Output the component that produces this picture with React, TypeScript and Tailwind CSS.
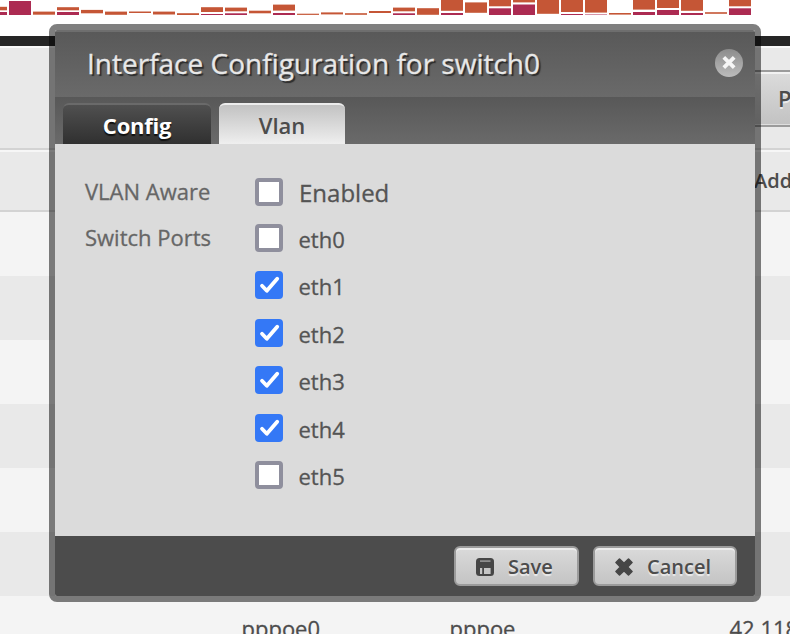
import React from "react";

type Segment = [top: number, bottom: number];
type Bar = { tx?: Segment; rx?: Segment };

const TRAFFIC: Bar[] = [
  { tx: [6.8, 10.3], rx: [12, 15] },
  { rx: [1, 15] },
  { tx: [11.6, 14.7] },
  { tx: [7.2, 10.3], rx: [12, 15] },
  { tx: [9.9, 13.3] },
  { tx: [11.6, 14.8] },
  { tx: [11.5, 13] },
  { tx: [11.6, 14.5] },
  { tx: [13.2, 15] },
  { tx: [7.2, 12], rx: [14, 15] },
  { tx: [7.6, 11.3], rx: [13.3, 15] },
  { tx: [10.7, 13.3] },
  { tx: [4.6, 10.6], rx: [13, 15] },
  { tx: [13.7, 14.9] },
  { tx: [12.4, 14.4] },
  { tx: [13.2, 14.8] },
  { tx: [11, 13] },
  { tx: [7.6, 11.3], rx: [13.3, 15] },
  { tx: [8.2, 14.8] },
  { tx: [0, 10.8], rx: [13, 15] },
  { tx: [2.4, 12.8] },
  { tx: [0, 6.3], rx: [8.3, 15] },
  { tx: [0, 2.4], rx: [4.5, 15] },
  { tx: [0, 13.8] },
  { tx: [0, 12], rx: [14, 15] },
  { tx: [0, 12.6], rx: [14.5, 15] },
  { tx: [13, 14.6] },
  { tx: [0, 9.6], rx: [12, 15] },
  { tx: [0, 8], rx: [10, 15] },
  { tx: [0, 10.8], rx: [13, 15] },
  { tx: [12.2, 13.8] },
  { tx: [0, 6.3], rx: [8.3, 15] },
];

function TrafficChart() {
  return (
    <svg className="block h-9 w-[790px] shrink-0 bg-white" viewBox="0 0 790 36">
      {TRAFFIC.map(({ tx, rx }, i) => (
        <g key={i}>
          {tx && <rect x={i * 24 - 15} y={tx[0]} width={22} height={tx[1] - tx[0]} fill="#c55636" />}
          {rx && <rect x={i * 24 - 15} y={rx[0]} width={22} height={rx[1] - rx[0]} fill="#ac2b52" />}
        </g>
      ))}
    </svg>
  );
}

function Page() {
  return (
    <div className="flex h-[634px] w-[790px] flex-col overflow-hidden text-[#4c4c4c]">
      <TrafficChart />
      <div className="h-2.5 shrink-0 bg-[#262626]" />
      <div className="flex h-[104px] shrink-0 justify-end border-t-2 border-b-2 border-t-[#f9f9f9] border-b-[#d3d3d3] bg-[#e9e9e9] pt-[22px]">
        <div className="-mr-10 flex h-[57px] w-[90px] items-center border-2 border-[#9b9b9b] bg-linear-to-b from-[#dcdcdc] to-[#c2c2c2] pl-9 text-[22px] font-semibold shadow-[inset_0_2px_0_#f2f2f2,inset_0_-1px_0_#dedede] [text-shadow:0_2px_0_#ececec]">
          P
        </div>
      </div>
      <div className="flex h-[62px] shrink-0 items-center border-t-2 border-b-2 border-t-[#f6f6f6] border-b-[#d3d3d3] bg-[#e9e9e9] pl-[754px] text-[20px] font-semibold">
        Add
      </div>
      <div className="h-16 shrink-0 bg-[#f4f4f4]" />
      <div className="h-16 shrink-0 bg-[#e9e9e9]" />
      <div className="h-16 shrink-0 bg-[#f4f4f4]" />
      <div className="h-16 shrink-0 bg-[#e9e9e9]" />
      <div className="h-16 shrink-0 bg-[#f4f4f4]" />
      <div className="h-16 shrink-0 bg-[#e9e9e9]" />
      <div className="flex h-16 shrink-0 items-center bg-[#f4f4f4] pl-[241.5px] text-[22px] [-webkit-text-stroke:0.3px]">
        <span className="w-[208px] shrink-0">pppoe0</span>
        <span className="w-[280px] shrink-0">pppoe</span>
        <span>42.118</span>
      </div>
    </div>
  );
}

function Checkbox({ checked }: { checked?: boolean }) {
  if (!checked) {
    return <span className="size-7 shrink-0 rounded-[4px] border-4 border-[#8f8f9d] bg-white" />;
  }
  return (
    <span className="size-7 shrink-0 rounded-[4px] bg-[#3478f6]">
      <svg viewBox="0 0 28 28" className="size-7" fill="none" stroke="#fff" strokeWidth="3.8" strokeLinecap="round" strokeLinejoin="round">
        <path d="M7 14.8 L11.8 19.8 L22.2 7.8" />
      </svg>
    </span>
  );
}

const PORTS = [
  { name: "eth0", checked: false, row: "h-[47px]" },
  { name: "eth1", checked: true, row: "h-[48px]" },
  { name: "eth2", checked: true, row: "h-[47px]" },
  { name: "eth3", checked: true, row: "h-[48px]" },
  { name: "eth4", checked: true, row: "h-[47px]" },
  { name: "eth5", checked: false, row: "h-[47px]" },
];

function Dialog() {
  return (
    <div className="absolute top-6 left-[49px] w-[712px] overflow-hidden rounded-[8px] border-6 border-black/50 bg-clip-padding">
      <header className="flex h-[67px] items-center justify-between border-t-2 border-[#6e6e6e] bg-linear-to-b from-[#595959] to-[#6a6a6a] pr-3 pl-8">
        <h1 className="-mt-1 text-[28px] leading-[38px] text-[#e8e8e8] [-webkit-text-stroke:0.3px] [text-shadow:2px_2px_1px_#2b2b2b]">
          Interface Configuration for switch0
        </h1>
        <svg viewBox="0 0 28 28" className="mt-[-3px] size-7">
          <defs>
            <linearGradient id="close" x1="0" y1="0" x2="0" y2="1">
              <stop offset="0" stopColor="#8c8c8c" />
              <stop offset="1" stopColor="#bcbcbc" />
            </linearGradient>
          </defs>
          <circle cx="14" cy="14" r="14" fill="url(#close)" />
          <path d="M8.8 8.3 L19.2 18.7 M19.2 8.3 L8.8 18.7" stroke="#f6f6f6" strokeWidth="3.8" />
        </svg>
      </header>
      <nav className="flex h-[47px] items-end gap-2 bg-linear-to-b from-[#585858] to-[#6a6a6a] px-2 text-[22px]">
        <span className="flex h-[41px] w-[148px] items-center justify-center rounded-t-[6px] border-t-2 border-[#6a6a6a] bg-linear-to-b from-[#505050] to-[#303030] pt-0.5 font-bold text-white [text-shadow:0_2px_1px_#111]">
          <span className="tracking-[-0.25px]">Config</span>
        </span>
        <span className="flex h-[41px] w-[126px] items-center justify-center rounded-t-[6px] border-t-2 border-[#ececec] bg-linear-to-b from-[#c2c2c2] to-[#efefef] pt-0.5 font-semibold text-[#4c4c4c]">
          Vlan
        </span>
      </nav>
      <main className="flex h-[392px] flex-col bg-[#dbdbdb] pt-[34px] pl-[30px] text-[22px] leading-[28px] text-[#545454] [-webkit-text-stroke:0.3px]">
        <div className="flex h-[46px] items-start">
          <span className="-mt-px w-[170px] text-[#666]">VLAN Aware</span>
          <Checkbox />
          <span className="pt-px pl-4 text-[24px]">Enabled</span>
        </div>
        <div className="flex">
          <span className="-mt-px w-[170px] text-[#666]">Switch Ports</span>
          <div className="flex flex-col">
            {PORTS.map((port) => (
              <div key={port.name} className={`flex items-start ${port.row}`}>
                <Checkbox checked={port.checked} />
                <span className="pt-px pl-[15.5px]">{port.name}</span>
              </div>
            ))}
          </div>
        </div>
      </main>
      <footer className="flex h-[60px] items-center justify-end gap-3.5 bg-[#4c4c4c] pr-[18px] text-[20px] font-semibold text-[#4c4c4c]">
        <button className="flex h-10 w-[125px] items-center rounded-[6px] border-2 border-[#9b9b9b] bg-linear-to-b from-[#dadada] to-[#c4c4c4] pl-5 shadow-[inset_0_2px_0_#ebebeb] [text-shadow:0_2px_1px_#ececec]">
          <svg viewBox="0 0 18 18" className="mt-0.5 size-[18px] blur-[0.4px]">
            <rect width="18" height="18" rx="3.5" fill="#464646" />
            <rect x="4" y="2.2" width="10.5" height="1.8" fill="#8d8d8d" />
            <path fill="#c6c6c6" d="M4 10H6.2V16H4ZM8 10H14.6V16H8Z" />
          </svg>
          <span className="pt-0.5 pl-3.5">Save</span>
        </button>
        <button className="flex h-10 w-36 items-center rounded-[6px] border-2 border-[#9b9b9b] bg-linear-to-b from-[#dadada] to-[#c4c4c4] pl-5 shadow-[inset_0_2px_0_#ebebeb] [text-shadow:0_2px_1px_#ececec]">
          <svg viewBox="0 0 18 18" className="mt-0.5 size-[18px] blur-[0.4px]">
            <path fill="#464646" stroke="#464646" strokeWidth="1.6" strokeLinejoin="round" d="M4.5 1L9 5.4L13.5 1L17 4.5L12.6 9L17 13.5L13.5 17L9 12.6L4.5 17L1 13.5L5.4 9L1 4.5Z" />
          </svg>
          <span className="pt-0.5 pl-3.5">Cancel</span>
        </button>
      </footer>
    </div>
  );
}

export default function App() {
  return (
    <div className="relative h-[634px] w-[790px] overflow-hidden font-['Open_Sans','Noto_Sans',sans-serif]">
      <Page />
      <Dialog />
    </div>
  );
}
